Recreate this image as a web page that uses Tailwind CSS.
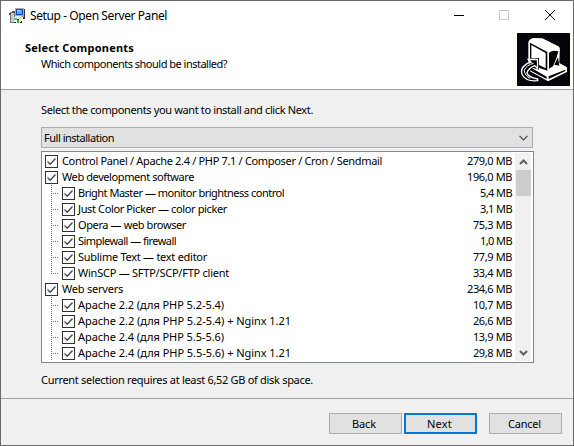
<!DOCTYPE html>
<html lang="en">
<head>
<meta charset="utf-8">
<title>Setup - Open Server Panel</title>
<script src="https://cdn.jsdelivr.net/npm/@tailwindcss/browser@4"></script>
</head>
<body class="w-[574px] h-[446px] overflow-hidden">
<main class="w-[574px] h-[446px] flex flex-col bg-[#f0f0f0] border border-[#6b696b] font-['Noto_Sans',sans-serif] text-[11px] leading-4 text-black whitespace-nowrap">
  <header class="h-[89px] shrink-0 bg-white border-b border-[#a0a0a0]">
    <div class="h-[30px] flex items-center pl-2">
      <svg class="w-4 h-4 shrink-0" viewBox="0 0 16 16" shape-rendering="crispEdges">
        <path d="M1 4h5v11H1z" fill="#777"/><path d="M2 5h3v9H2z" fill="#c9c9c9"/><path d="M0 5h2v2H0zM3 3h3v2H3z" fill="#555"/>
        <path d="M6 0h9v9H6z" fill="#a9a9a9"/><path d="M15 1h1v10h-2v-2h1z" fill="#303030"/><path d="M7 1h7v6H7z" fill="#1747b5"/><path d="M8 2h5v4H8z" fill="#4eaaf4"/><path d="M8 2h3v1H8z" fill="#b3e3ff"/>
        <circle cx="9" cy="11.5" r="4" fill="#e8f2e6"/><path d="M5 10h3v2H5z" fill="#35c8c4"/><path d="M8 12h2v3H8z" fill="#24b434"/><path d="M10 9h2v2h-2z" fill="#e5df39"/><path d="M8 11h2v1H8z" fill="#333"/><path d="M5 14h2v1H5zM12 13h1v2h-2v-1h1z" fill="#222"/>
      </svg>
      <span data-fit="137" data-font="12px" class="ml-[5px] text-xs">Setup - Open Server Panel</span>
      <svg class="ml-auto w-[102px] h-[12px] mr-[17px] -mt-[2px]" viewBox="0 0 102 12" fill="none" shape-rendering="crispEdges">
        <path d="M0 6.500h10" stroke="#000"/><rect x="45.500" y="1.500" width="9" height="9" stroke="#ccc"/><path d="M91 1l10 10M101 1l-10 10" stroke="#111" shape-rendering="auto"/>
      </svg>
    </div>
    <div class="flex justify-between pl-6 pr-[3px]">
      <div class="pt-[9px]">
        <h1 class="font-bold h-4"><span data-fit="109" data-font="bold 11px">Select Components</span></h1>
        <p class="pl-4"><span data-fit="186">Which components should be installed?</span></p>
      </div>
      <svg class="w-[53px] h-[53px] mt-[2px]" viewBox="0 0 159 159">
        <defs><pattern id="dots" width="12" height="12" patternUnits="userSpaceOnUse"><path d="M0 0h3v3H0zM6 6h3v3H6z" fill="#0000a0"/></pattern></defs>
        <path d="M0 0h159v159H0z" fill="#000"/><path d="M0 0h159v159H0z" fill="url(#dots)"/>
        <path d="M34 28Q36 17 50 15L76 16 124 40Q131 45 128 57L127 90 150 103V117L93 145 36 113V90H34z" fill="#fff"/>
        <path d="M39 29L91 57V113L60 102V80H39z" fill="#000"/><path d="M43 36L86 60V106L65 95V76H43z" fill="#fff"/>
        <path d="M96 59Q107 50 124 55Q120 75 108 100L96 107z" fill="#000"/>
        <path d="M123 73L127 98 112 95zM40 103L89 131V138L36 110zM95 130L145 110V114L95 138z" fill="#000"/>
        <path d="M58 75H66V110L49 105Q38 109 35 119Q36 130 64 137V146Q24 148 13 128" fill="#000"/>
        <path d="M34 79.500H61.500V107L53 98Q34 106 30 119Q31 132 62 138V143Q29 147 16 126Q7 106 31 91L42 88z" fill="#000" stroke="#fff" stroke-width="4"/>
        <path d="M50 91Q28 96 22 112Q23 129 40 136" fill="none" stroke="#fff" stroke-width="3"/>
      </svg>
    </div>
  </header>
  <section class="h-[308px] shrink-0 pt-[12px] pl-10 pr-10">
    <p class="h-4"><span data-fit="272">Select the components you want to install and click Next.</span></p>
    <div class="mt-[9px] w-[492px] h-[21px] flex items-center justify-between border border-[#adadad] bg-[#e1e1e1] pl-[2px] pr-1">
      <span data-fit="70">Full installation</span>
      <svg class="w-[9px] h-[6px]" viewBox="0 0 9 6" fill="none"><path d="M.5 .8l4 4 4-4" stroke="#444" stroke-width="1.200"/></svg>
    </div>
    <div class="mt-[3px] w-[493px] h-[212px] flex border border-[#828790] bg-white py-px">
      <div id="rows" class="flex-1 pl-[3px] pr-[3px]"></div>
      <div class="w-[16px] bg-[#f0f0f0] mr-[2px] flex flex-col items-center">
        <div class="h-[17px] flex items-center"><svg class="w-[9px] h-[6px]" viewBox="0 0 9 6" fill="none"><path d="M1 5l3.500-3.500L8 5" stroke="#606060" stroke-width="2"/></svg></div>
        <div class="w-[15px] h-[26px] bg-[#cdcdcd]"></div>
        <div class="mt-auto h-[17px] flex items-center"><svg class="w-[9px] h-[6px]" viewBox="0 0 9 6" fill="none"><path d="M1 1l3.500 3.500L8 1" stroke="#606060" stroke-width="2"/></svg></div>
      </div>
    </div>
    <p class="mt-[9px]"><span data-fit="272">Current selection requires at least 6,52 GB of disk space.</span></p>
  </section>
  <footer class="flex-1 border-t border-[#a0a0a0] flex justify-end pt-[14px] pr-[11px]">
    <button class="w-[73px] h-[21px] leading-[18px] pr-[3px] border border-[#adadad] bg-[#e1e1e1]"><span data-fit="24">Back</span></button>
    <button class="ml-[2px] w-[73px] h-[21px] leading-[16px] pr-[2px] border-2 border-[#0078d7] bg-[#e1e1e1]"><span data-fit="25">Next</span></button>
    <button class="ml-3 w-[73px] h-[21px] leading-[18px] pr-[2px] border border-[#adadad] bg-[#e1e1e1]"><span data-fit="33">Cancel</span></button>
  </footer>
</main>
<script>
// [label, size, is child, label width, is last child]
const items = [
 ['Control Panel / Apache 2.4 / PHP 7.1 / Composer / Cron / Sendmail','279,0 MB',0,320],
 ['Web development software','196,0 MB',0,132],
 ['Bright Master — monitor brightness control','5,4 MB',1,206],
 ['Just Color Picker — color picker','3,1 MB',1,149],
 ['Opera — web browser','75,3 MB',1,108],
 ['Simplewall — firewall','1,0 MB',1,98],
 ['Sublime Text — text editor','77,9 MB',1,129],
 ['WinSCP — SFTP/SCP/FTP client','33,4 MB',1,151,1],
 ['Web servers','234,6 MB',0,61],
 ['Apache 2.2 (для PHP 5.2-5.4)','10,7 MB',1,146],
 ['Apache 2.2 (для PHP 5.2-5.4) + Nginx 1.21','26,6 MB',1,213],
 ['Apache 2.4 (для PHP 5.5-5.6)','13,9 MB',1,146],
 ['Apache 2.4 (для PHP 5.5-5.6) + Nginx 1.21','29,8 MB',1,213]
];
const sizeWidth = {8: 45, 7: 39, 6: 32};
const check = '<svg class="w-[13px] h-[13px] shrink-0" viewBox="0 0 13 13"><rect x=".5" y=".5" width="12" height="12" fill="#fff" stroke="#333"/><path d="M2.500 6.500l2.700 2.700 5.300-5.700" fill="none" stroke="#444" stroke-width="1.300"/></svg>';
document.getElementById('rows').innerHTML = items.map(([t,s,c,w,last]) =>
 '<div class="h-4 flex items-center">' +
 (c ? `<svg class="w-[17px] h-4 shrink-0" viewBox="0 0 17 16" fill="none" shape-rendering="crispEdges"><path d="M6.500 0V${last?9:16}M8 8.500h6" stroke="#777" stroke-dasharray="1 1"/></svg>` : '') +
 check + `<span data-fit="${w}" class="${c ? 'ml-[3px]' : 'ml-1'}">${t}</span><span data-fit="${sizeWidth[s.length]}" class="ml-auto">${s}</span></div>`).join('');
// Tighten or loosen tracking so that each label takes its nominal width
const ctx = document.createElement('canvas').getContext('2d');
document.querySelectorAll('[data-fit]').forEach(el => {
  ctx.font = (el.dataset.font || '11px') + ' "Noto Sans"';
  const text = el.textContent;
  el.style.letterSpacing = ((+el.dataset.fit - ctx.measureText(text).width) / text.length) + 'px';
});
</script>
</body>
</html>
